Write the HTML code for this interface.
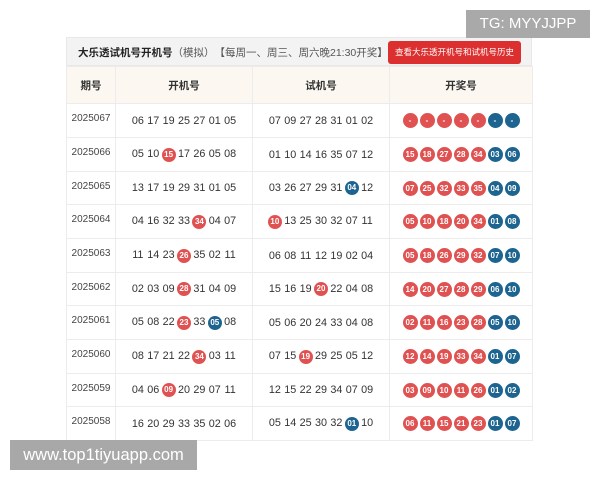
<!DOCTYPE html>
<html><head><meta charset="utf-8"><style>
body{margin:0;width:600px;height:480px;background:#fff;position:relative;overflow:hidden;font-family:"Liberation Sans","Noto Sans CJK SC",sans-serif;}
.wrap{position:absolute;left:66px;top:37px;width:466px;}
.top{height:29px;background:#f3f3f3;position:relative;border:1px solid #e8e8e8;box-sizing:border-box;}
.title{position:absolute;left:11px;top:7px;font-size:10.5px;font-weight:bold;color:#222;}
.title span{font-weight:normal;color:#555;}
.btn{position:absolute;left:321px;top:3px;width:133px;height:23px;background:#dc2f2f;border-radius:3px;color:#fff;font-size:8.5px;line-height:23px;text-align:center;}
table{border-collapse:collapse;width:466px;table-layout:fixed;}
td{border:1px solid #ececec;text-align:center;padding:0;font-size:10.8px;color:#333;}
tr.h td{height:36px;background:#fcf8f1;font-weight:bold;font-size:10.5px;color:#333;}
td.p{font-size:10px;color:#444;vertical-align:middle;padding-bottom:4px;}
.n{display:inline-block;width:15.4px;text-align:center;}
.r,.b{display:inline-block;width:14px;height:14px;border-radius:50%;color:#fff;font-size:8px;font-weight:bold;line-height:14px;margin:0 .7px;vertical-align:middle;}
.r{background:#e05252;}.b{background:#1d6590;}
.balls .r,.balls .b{margin:0 1px;width:15px;height:15px;line-height:15px;}
.wm1{position:absolute;left:466px;top:10px;width:124px;height:28px;background:#a9a9a9;color:#fff;font-size:15px;line-height:28px;text-align:center;}
.wm2{position:absolute;left:10px;top:440px;width:187px;height:30px;background:#a8a8a8;color:#fff;font-size:16.5px;line-height:30px;text-align:center;}
</style></head><body>
<div class="wrap">
<div class="top"><div class="title">大乐透试机号开机号<span>（模拟）　【每周一、周三、周六晚21:30开奖】</span></div><div class="btn">查看大乐透开机号和试机号历史</div></div>
<table>
<colgroup><col style="width:49px"><col style="width:137px"><col style="width:137px"><col style="width:143px"></colgroup>
<tr class="h"><td>期号</td><td>开机号</td><td>试机号</td><td>开奖号</td></tr>
<tr style="height:34px"><td class="p">2025067</td><td><span class="n">06</span><span class="n">17</span><span class="n">19</span><span class="n">25</span><span class="n">27</span><span class="n">01</span><span class="n">05</span></td><td><span class="n">07</span><span class="n">09</span><span class="n">27</span><span class="n">28</span><span class="n">31</span><span class="n">01</span><span class="n">02</span></td><td class="balls"><span class="r">-</span><span class="r">-</span><span class="r">-</span><span class="r">-</span><span class="r">-</span><span class="b">-</span><span class="b">-</span></td></tr>
<tr style="height:34px"><td class="p">2025066</td><td><span class="n">05</span><span class="n">10</span><span class="r">15</span><span class="n">17</span><span class="n">26</span><span class="n">05</span><span class="n">08</span></td><td><span class="n">01</span><span class="n">10</span><span class="n">14</span><span class="n">16</span><span class="n">35</span><span class="n">07</span><span class="n">12</span></td><td class="balls"><span class="r">15</span><span class="r">18</span><span class="r">27</span><span class="r">28</span><span class="r">34</span><span class="b">03</span><span class="b">06</span></td></tr>
<tr style="height:33px"><td class="p">2025065</td><td><span class="n">13</span><span class="n">17</span><span class="n">19</span><span class="n">29</span><span class="n">31</span><span class="n">01</span><span class="n">05</span></td><td><span class="n">03</span><span class="n">26</span><span class="n">27</span><span class="n">29</span><span class="n">31</span><span class="b">04</span><span class="n">12</span></td><td class="balls"><span class="r">07</span><span class="r">25</span><span class="r">32</span><span class="r">33</span><span class="r">35</span><span class="b">04</span><span class="b">09</span></td></tr>
<tr style="height:34px"><td class="p">2025064</td><td><span class="n">04</span><span class="n">16</span><span class="n">32</span><span class="n">33</span><span class="r">34</span><span class="n">04</span><span class="n">07</span></td><td><span class="r">10</span><span class="n">13</span><span class="n">25</span><span class="n">30</span><span class="n">32</span><span class="n">07</span><span class="n">11</span></td><td class="balls"><span class="r">05</span><span class="r">10</span><span class="r">18</span><span class="r">20</span><span class="r">34</span><span class="b">01</span><span class="b">08</span></td></tr>
<tr style="height:34px"><td class="p">2025063</td><td><span class="n">11</span><span class="n">14</span><span class="n">23</span><span class="r">26</span><span class="n">35</span><span class="n">02</span><span class="n">11</span></td><td><span class="n">06</span><span class="n">08</span><span class="n">11</span><span class="n">12</span><span class="n">19</span><span class="n">02</span><span class="n">04</span></td><td class="balls"><span class="r">05</span><span class="r">18</span><span class="r">26</span><span class="r">29</span><span class="r">32</span><span class="b">07</span><span class="b">10</span></td></tr>
<tr style="height:33px"><td class="p">2025062</td><td><span class="n">02</span><span class="n">03</span><span class="n">09</span><span class="r">28</span><span class="n">31</span><span class="n">04</span><span class="n">09</span></td><td><span class="n">15</span><span class="n">16</span><span class="n">19</span><span class="r">20</span><span class="n">22</span><span class="n">04</span><span class="n">08</span></td><td class="balls"><span class="r">14</span><span class="r">20</span><span class="r">27</span><span class="r">28</span><span class="r">29</span><span class="b">06</span><span class="b">10</span></td></tr>
<tr style="height:34px"><td class="p">2025061</td><td><span class="n">05</span><span class="n">08</span><span class="n">22</span><span class="r">23</span><span class="n">33</span><span class="b">05</span><span class="n">08</span></td><td><span class="n">05</span><span class="n">06</span><span class="n">20</span><span class="n">24</span><span class="n">33</span><span class="n">04</span><span class="n">08</span></td><td class="balls"><span class="r">02</span><span class="r">11</span><span class="r">16</span><span class="r">23</span><span class="r">28</span><span class="b">05</span><span class="b">10</span></td></tr>
<tr style="height:34px"><td class="p">2025060</td><td><span class="n">08</span><span class="n">17</span><span class="n">21</span><span class="n">22</span><span class="r">34</span><span class="n">03</span><span class="n">11</span></td><td><span class="n">07</span><span class="n">15</span><span class="r">19</span><span class="n">29</span><span class="n">25</span><span class="n">05</span><span class="n">12</span></td><td class="balls"><span class="r">12</span><span class="r">14</span><span class="r">19</span><span class="r">33</span><span class="r">34</span><span class="b">01</span><span class="b">07</span></td></tr>
<tr style="height:33px"><td class="p">2025059</td><td><span class="n">04</span><span class="n">06</span><span class="r">09</span><span class="n">20</span><span class="n">29</span><span class="n">07</span><span class="n">11</span></td><td><span class="n">12</span><span class="n">15</span><span class="n">22</span><span class="n">29</span><span class="n">34</span><span class="n">07</span><span class="n">09</span></td><td class="balls"><span class="r">03</span><span class="r">09</span><span class="r">10</span><span class="r">11</span><span class="r">26</span><span class="b">01</span><span class="b">02</span></td></tr>
<tr style="height:34px"><td class="p">2025058</td><td><span class="n">16</span><span class="n">20</span><span class="n">29</span><span class="n">33</span><span class="n">35</span><span class="n">02</span><span class="n">06</span></td><td><span class="n">05</span><span class="n">14</span><span class="n">25</span><span class="n">30</span><span class="n">32</span><span class="b">01</span><span class="n">10</span></td><td class="balls"><span class="r">06</span><span class="r">11</span><span class="r">15</span><span class="r">21</span><span class="r">23</span><span class="b">01</span><span class="b">07</span></td></tr>
</table>
</div>
<div class="wm1">TG: MYYJJPP</div>
<div class="wm2">www.top1tiyuapp.com</div>
</body></html>
